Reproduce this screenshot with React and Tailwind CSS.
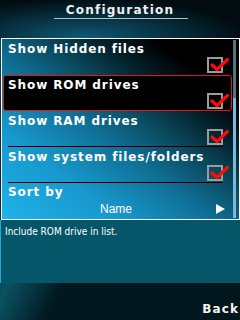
import React from "react";

const rows = [
  { label: "Show Hidden files", checked: true },
  { label: "Show ROM drives", checked: true, selected: true },
  { label: "Show RAM drives", checked: true, line: true },
  { label: "Show system files/folders", checked: true, line: true },
];

function CheckBox() {
  return (
    <div className="relative w-[16px] h-[16px] border-2 border-[#9c9c9c]">
      <svg
        className="absolute left-[-2px] top-[-2px] overflow-visible"
        width="24"
        height="16"
        viewBox="0 0 24 16"
      >
        <polyline
          points="5,8 10,12.5 20.5,2.5"
          fill="none"
          stroke="#ff0a0a"
          strokeWidth="3.2"
          strokeLinecap="round"
          strokeLinejoin="round"
        />
      </svg>
    </div>
  );
}

function Row({ label, selected, line }) {
  return (
    <div
      className={
        "relative h-[36px] border rounded-[3px] pl-[4px] pt-[2px] " +
        (selected ? "border-[#e8141c] bg-black" : "border-transparent")
      }
    >
      <div className="text-[12px] leading-[14px] font-bold tracking-[0.9px] text-white">
        {label}
      </div>
      <div className="flex justify-end pr-[8px] mt-[1px]">
        <CheckBox />
      </div>
      {line && (
        <div className="absolute left-[4px] right-[8px] bottom-[-1px] h-[1px] bg-black" />
      )}
    </div>
  );
}

export default function App() {
  return (
    <div className="w-[240px] h-[320px] flex flex-col overflow-hidden font-['DejaVu_Sans',sans-serif] bg-[linear-gradient(115deg,#0a4a5a_0%,#03222c_22%,#0a5262_36%,#021820_50%,#02161c_100%)]">
      {/* header */}
      <div className="h-[38px] flex flex-col items-center pt-[3px] bg-[radial-gradient(ellipse_at_35%_100%,#0e5a76_0%,#06303f_40%,#010b10_75%)]">
        <div className="text-[12px] leading-[14px] font-bold tracking-[1.2px] text-[#f0f0f0]">
          Configuration
        </div>
        <div className="w-[134px] h-[1px] bg-[#b8c0c4] mt-[1px] ml-[2px]" />
      </div>

      {/* list */}
      <div className="ml-[1px] w-[239px] h-[182px] border border-white flex bg-[linear-gradient(to_top_right,#1fb2ea_0%,#1898cc_25%,#0f6e94_45%,#0a4a5e_58%,#03222c_70%,#000_82%)]">
        <div className="ml-[1px] w-[229px] flex flex-col">
          {rows.map((r) => (
            <Row key={r.label} {...r} />
          ))}
          <div className="relative h-[36px] pl-[5px] pt-[2px]">
            <div className="text-[12px] leading-[14px] font-bold tracking-[0.9px] text-white">
              Sort by
            </div>
            <div className="flex items-center mt-[2px]">
              <div className="flex-1 text-center pl-[8px] text-[12px] leading-[16px] font-['Liberation_Sans',sans-serif] text-white">
                Name
              </div>
              <svg width="9" height="10" viewBox="0 0 9 10" className="mr-[7px]">
                <polygon points="0,0 9,5 0,10" fill="#ffffff" />
              </svg>
            </div>
          </div>
        </div>
        <div className="ml-[1px] w-[3px] mt-[1px] mb-[1px] flex flex-col">
          <div className="h-[58px] bg-[#557585]" />
          <div className="flex-1 bg-[#7cb8dc]" />
        </div>
      </div>

      {/* info */}
      <div className="h-[63px] bg-[#065669] border-l border-[#2aa6d6] px-[4px] pt-[6px]">
        <div className="text-[10px] leading-[12px] text-white font-['DejaVu_Sans_Condensed','DejaVu_Sans',sans-serif]">
          Include ROM drive in list.
        </div>
      </div>

      {/* softkeys */}
      <div className="flex-1 flex items-end justify-end pb-[4px] pr-[1px]">
        <div className="text-[12px] leading-[14px] font-bold tracking-[1.1px] text-[#f4f4f4]">
          Back
        </div>
      </div>
    </div>
  );
}
